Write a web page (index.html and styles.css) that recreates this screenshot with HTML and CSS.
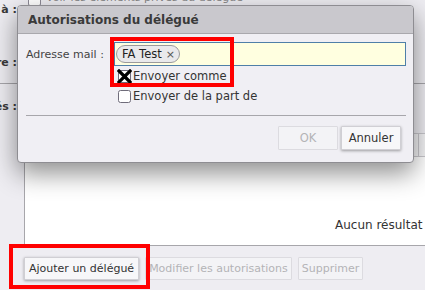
FILE: index.html
```html
<!DOCTYPE html>
<html lang="fr">
<head>
  <meta charset="UTF-8" />
  <title>Délégués</title>
  <link rel="stylesheet" href="styles.css">
</head>
<body>

  <div class="page">
    <div class="field-row first">
      <div class="field-label"><span>Délégués à :</span></div>
      <div class="field-value">
        <span class="box"></span>
        <span class="faint">Voir les éléments privés du délégué</span>
      </div>
    </div>
    <div class="field-row second">
      <div class="field-label"><span>Signature :</span></div>
    </div>
    <div class="rule"></div>
    <div class="field-row third">
      <div class="field-label"><span>Délégués :</span></div>
    </div>

    <div class="panel">
      <div class="panel-head">
        <span class="col"></span>
        <span class="col"></span>
      </div>
      <div class="panel-body">
        <span class="empty">Aucun résultat</span>
      </div>
    </div>

    <div class="actions">
      <button class="btn raised">Ajouter un délégué</button>
      <button class="btn" disabled>Modifier les autorisations</button>
      <button class="btn" disabled>Supprimer</button>
    </div>
  </div>

  <!-- dialog sits over the page -->
  <div class="dialog">
    <div class="dialog-title">Autorisations du délégué</div>
    <div class="dialog-body">
      <div class="form-row">
        <label class="form-label">Adresse mail :</label>
        <div class="recipient">
          <span class="chip">FA Test <span class="chip-x">×</span></span>
        </div>
      </div>
      <div class="check-row">
        <svg class="check" width="15" height="15" viewBox="0 0 15 15">
          <rect x="1.5" y="1.5" width="12" height="12" rx="2" fill="#fff" stroke="#6f6c7a" />
          <path d="M2 2 L13 13 M13 2 L2 13" stroke="#000" stroke-width="3.2" stroke-linecap="square" />
        </svg>
        <span>Envoyer comme</span>
      </div>
      <div class="check-row">
        <svg class="check" width="15" height="15" viewBox="0 0 15 15">
          <rect x="1.5" y="1.5" width="12" height="12" rx="2" fill="#fff" stroke="#6f6c7a" />
        </svg>
        <span>Envoyer de la part de</span>
      </div>
      <div class="dialog-sep"></div>
      <div class="dialog-buttons">
        <button class="btn wide" disabled>OK</button>
        <button class="btn wide raised">Annuler</button>
      </div>
    </div>
  </div>

  <div class="mark mark-top"></div>
  <div class="mark mark-bottom"></div>

</body>
</html>
```

FILE: styles.css
```css
* {
  box-sizing: border-box;
  margin: 0;
  padding: 0;
}

body {
  font-family: 'DejaVu Sans', sans-serif;
  font-size: 11px;
  color: #333;
  background-color: #eeedf2;
  width: 425px;
  height: 290px;
  overflow: hidden;
  position: relative;
}

.page {
  display: flex;
  flex-direction: column;
}

.field-row {
  display: flex;
  align-items: center;
}

.field-row.first {
  height: 18px;
}

.field-row.second {
  height: 18px;
  margin-top: 35px;
}

.field-row.third {
  height: 18px;
  margin-top: 13px;
}

.field-label {
  width: 17px;
  display: flex;
  justify-content: flex-end;
  overflow: hidden;
  white-space: nowrap;
  font-weight: 700;
  color: #3a3a3a;
}

.field-value {
  align-self: flex-start;
  display: flex;
  align-items: flex-start;
  gap: 5px;
  padding-left: 11px;
  margin-top: -7px;
}

.box {
  width: 13px;
  height: 13px;
  border: 1px solid #8d8a96;
  border-radius: 2px;
  background: #fff;
}

.faint {
  color: #888;
  margin-top: -2px;
}

.rule {
  height: 1px;
  background: #a7a6ab;
  margin-top: 12px;
}

.panel {
  margin-top: 18px;
  margin-left: 24px;
  border-left: 1px solid #a7a6ab;
  border-bottom: 1px solid #a7a6ab;
  background: #fff;
}

.panel-head {
  height: 24px;
  display: flex;
  justify-content: flex-end;
  border-top: 1px solid #c9c8cd;
  border-bottom: 1px solid #c9c8cd;
  background: #f4f4f6;
}

.panel-head .col {
  width: 7px;
  border-left: 1px solid #c9c8cd;
}

.panel-body {
  height: 88px;
  display: flex;
  align-items: flex-end;
  padding-left: 310px;
  padding-bottom: 13px;
  white-space: nowrap;
  font-size: 12px;
  color: #333;
}

.actions {
  display: flex;
  gap: 7px;
  padding: 11px 0 0 24px;
}

.btn {
  font-family: 'DejaVu Sans', sans-serif;
  font-size: 11px;
  height: 23px;
  padding: 0 4px;
  color: #333;
  background: #f3f3f6;
  border: 1px solid #dcdbe0;
  border-radius: 1px;
}

.btn.raised {
  background: #f7f7f9;
  border-color: #d0cfd4;
  box-shadow: 0 1px 3px rgba(0, 0, 0, 0.35);
}

.btn:disabled {
  color: #b3b3b6;
  background: #f3f3f6;
}

.actions .btn:disabled {
  padding: 0 3px;
  margin-left: -1px;
}

/* modal */
.dialog {
  position: absolute;
  left: 17px;
  top: 5px;
  width: 397px;
  height: 158px;
  background: #f0eff4;
  border: 1px solid #8e8d92;
  border-radius: 4px;
  box-shadow: 0 10px 26px rgba(0, 0, 0, 0.45);
  overflow: hidden;
}

.dialog-title {
  height: 28px;
  display: flex;
  align-items: center;
  padding-left: 10px;
  background: #c9c8cd;
  border-bottom: 1px solid #a9a8ad;
  font-size: 12px;
  font-weight: 700;
  color: #3a3a3a;
}

.dialog-body {
  padding: 8px 7px 0 8px;
  display: flex;
  flex-direction: column;
}

.form-row {
  display: flex;
  align-items: center;
}

.form-label {
  width: 88px;
  color: #444;
}

.recipient {
  flex: 1;
  height: 24px;
  display: flex;
  align-items: center;
  padding-left: 1px;
  background: #ffffe0;
  border: 1px solid #4f7fa8;
}

.chip {
  height: 18px;
  display: flex;
  align-items: center;
  padding: 0 4px 0 5px;
  gap: 4px;
  border: 1px solid #9a9a9c;
  border-radius: 9px;
  background: #e9e9eb;
  font-size: 11.5px;
  color: #222;
}

.chip-x {
  font-size: 11px;
  color: #555;
}

.check-row {
  display: flex;
  align-items: center;
  gap: 1px;
  height: 20px;
  padding-left: 91px;
  color: #333;
  font-size: 11.5px;
}

.dialog-sep {
  height: 1px;
  background: #a7a6ab;
  margin-top: 9px;
}

.dialog-buttons {
  display: flex;
  justify-content: flex-end;
  gap: 3px;
  padding: 10px 5px 0 0;
}

.btn.wide {
  width: 60px;
  height: 24px;
  font-size: 11.5px;
}

/* review highlights */
.mark {
  position: absolute;
  border: 4px solid #ff0000;
}

.mark-top {
  left: 110px;
  top: 37px;
  width: 124px;
  height: 50px;
}

.mark-bottom {
  left: 9px;
  top: 244px;
  width: 141px;
  height: 45px;
}
```
